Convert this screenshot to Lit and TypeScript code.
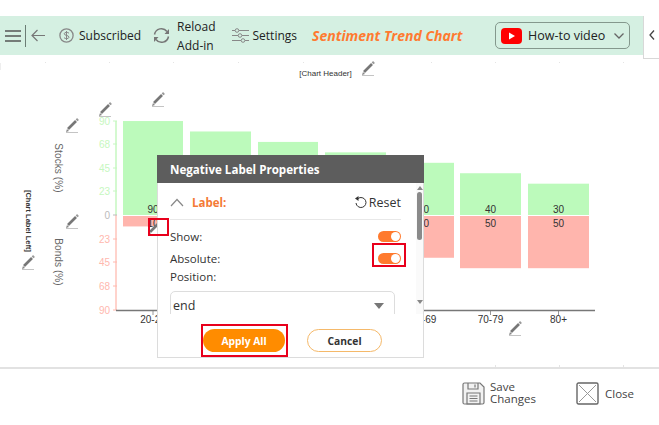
/**
 * Sentiment trend chart add-in with label properties dialog
 */

import { LitElement, css, html, svg } from "lit";
import { customElement } from "lit/decorators.js";

const BARS = [
  { x: 123, w: 60, label: "20-29", pos: 90, neg: 10 },
  { x: 190, w: 61, label: "30-39", pos: 80, neg: 20 },
  { x: 258, w: 60, label: "40-49", pos: 70, neg: 30 },
  { x: 325, w: 61, label: "50-59", pos: 60, neg: 40 },
  { x: 393, w: 61, label: "60-69", pos: 50, neg: 40 },
  { x: 460, w: 61, label: "70-79", pos: 40, neg: 50 },
  { x: 528, w: 61, label: "80+", pos: 30, neg: 50 },
];

const ZERO = 215;
const SCALE = 1.044;
const PENCILS = [
  [99, 103],
  [152, 93],
  [66, 119],
  [66, 215],
  [22, 256],
  [362, 62],
  [509, 322],
  [148, 222],
];
const TICKS = [
  { y: 121, t: "90", c: "#c6f7c0" },
  { y: 144, t: "68", c: "#c6f7c0" },
  { y: 168, t: "45", c: "#c6f7c0" },
  { y: 191, t: "23", c: "#c6f7c0" },
  { y: 215, t: "0", c: "#bbbbbb" },
  { y: 239, t: "23", c: "#ffb8ae" },
  { y: 262, t: "45", c: "#ffb8ae" },
  { y: 286, t: "68", c: "#ffb8ae" },
  { y: 310, t: "90", c: "#ffb8ae" },
];

const pencil = (x: number, y: number) => svg`
  <g transform="translate(${x} ${y})">
    <path d="M2 10 L10 2" stroke="#777" stroke-width="2.6" />
    <path d="M10.6 1.4 L12 0" stroke="#999" stroke-width="2.6" />
    <path d="M0 13 L1 10 L3 12 Z" fill="#888" />
    <path d="M0 13.5 H12" stroke="#c4c4c4" stroke-width="1" />
  </g>
`;

// bars whose labels sit fully behind the dialog don't get any text
const behindDialog = (b: { x: number; w: number }) => b.x > 157 && b.x + b.w < 390;

@customElement("app-root")
export class AppRoot extends LitElement {
  static styles = css`
    :host {
      display: block;
      width: 659px;
      height: 425px;
      background: #fff;
      font-family: "Open Sans", "Noto Sans", sans-serif;
      color: #222;
      overflow: hidden;
    }

    .top {
      display: flex;
      align-items: flex-start;
      padding-top: 16px;
      height: 43px;
    }

    .toolbar {
      width: 643px;
      height: 39px;
      flex: none;
      display: flex;
      align-items: center;
      background: #d5f0e2;
      font-size: 12px;
      box-sizing: border-box;
      padding-left: 5px;
    }

    .toolbar svg {
      display: block;
      flex: none;
    }

    .divider {
      width: 1px;
      height: 22px;
      background: #6b7d74;
      margin: 0 5px 0 4px;
    }

    .item {
      display: flex;
      align-items: center;
    }

    .reload-text {
      line-height: 19px;
      margin-left: 6px;
    }

    .title {
      margin-left: 15px;
      width: 183px;
      flex: none;
      font-size: 14px;
      font-weight: 700;
      font-style: italic;
      color: #ff7a30;
      white-space: nowrap;
    }

    .video {
      width: 135px;
      height: 27px;
      flex: none;
      box-sizing: border-box;
      border: 1px solid #84988d;
      border-radius: 5px;
      display: flex;
      align-items: center;
      padding-left: 5px;
      font-size: 12.5px;
    }

    .video span {
      margin-left: 6px;
      width: 86px;
      white-space: nowrap;
    }

    .side {
      flex: 1;
      height: 43px;
      box-sizing: border-box;
      border-left: 1px solid #d8d8d8;
      border-bottom: 1px solid #d8d8d8;
      display: flex;
      align-items: center;
      justify-content: center;
      padding-bottom: 4px;
    }

    .main {
      position: relative;
      height: 308px;
      border-bottom: 2px solid #e2e2e2;
    }

    .chart {
      display: block;
      font-family: "Liberation Sans", Arial, sans-serif;
    }

    .dialog {
      position: absolute;
      left: 157px;
      top: 96px;
      width: 267px;
      height: 203px;
      box-sizing: border-box;
      border: 1px solid #dcdcdc;
      border-top: none;
      background: #fff;
      display: flex;
      flex-direction: column;
    }

    .dialog-head {
      height: 28px;
      flex: none;
      margin: 0 -1px;
      background: #5d5d5d;
      color: #fff;
      font-size: 11.6px;
      font-weight: 700;
      display: flex;
      align-items: center;
      padding-left: 13px;
      white-space: nowrap;
    }

    .dialog-mid {
      height: 131px;
      flex: none;
      display: flex;
      overflow: hidden;
    }

    .props {
      width: 231px;
      margin-left: 12px;
      flex: none;
      font-size: 11.5px;
      color: #333;
    }

    .label-row {
      height: 37px;
      box-sizing: border-box;
      border-bottom: 1px solid #e8e8e8;
      display: flex;
      align-items: center;
      padding-top: 3px;
    }

    .label-row svg {
      display: block;
    }

    .label-name {
      margin-left: 6px;
      color: #f47a36;
      font-weight: 700;
      font-size: 11.5px;
      flex: 1;
    }

    .reset {
      display: flex;
      align-items: center;
      gap: 2px;
      font-size: 12.5px;
    }

    .row {
      height: 22px;
      display: flex;
      align-items: center;
      justify-content: space-between;
    }

    .row.first {
      margin-top: 5px;
    }

    .pos-label {
      height: 18px;
      margin-top: -2px;
      display: flex;
      align-items: center;
    }

    .toggle {
      width: 23px;
      height: 11px;
      border-radius: 6px;
      background: #ff7a2e;
      position: relative;
    }

    .toggle::after {
      content: "";
      position: absolute;
      right: 1px;
      top: 1px;
      width: 9px;
      height: 9px;
      border-radius: 50%;
      background: #fff;
    }

    .select {
      width: 225px;
      height: 40px;
      margin-top: 6px;
      box-sizing: border-box;
      border: 1px solid #dddddd;
      border-radius: 5px;
      padding: 5px 10px 0 2px;
      display: flex;
      justify-content: space-between;
      font-size: 12.5px;
    }

    .caret {
      width: 0;
      height: 0;
      margin-top: 6px;
      border-left: 5px solid transparent;
      border-right: 5px solid transparent;
      border-top: 6px solid #777;
    }

    .scroll {
      margin-left: 15px;
      width: 7px;
      flex: none;
      display: flex;
      flex-direction: column;
      align-items: center;
      background: #fafafa;
      position: relative;
    }

    .scroll .up {
      margin-top: 3px;
      border-left: 3px solid transparent;
      border-right: 3px solid transparent;
      border-bottom: 4px solid #888;
    }

    .scroll .thumb {
      width: 5px;
      height: 48px;
      margin-top: 2px;
      background: #8a8a8a;
      border-radius: 3px;
    }

    .scroll .down {
      margin-top: 60px;
      border-left: 3px solid transparent;
      border-right: 3px solid transparent;
      border-top: 4px solid #888;
    }

    .dialog-foot {
      flex: 1;
      display: flex;
      padding: 15px 0 0 45px;
      gap: 22px;
      font-size: 10.3px;
      font-weight: 700;
    }

    .btn {
      height: 23px;
      border-radius: 12px;
      box-sizing: border-box;
      display: flex;
      align-items: center;
      justify-content: center;
    }

    .apply {
      width: 82px;
      background: #ff8c00;
      color: #fff;
    }

    .cancel {
      width: 75px;
      border: 1px solid #f5b96a;
      color: #333;
    }

    .mark {
      position: absolute;
      border: 2px solid #e8001c;
      box-sizing: border-box;
    }

    .mark.bar {
      left: 148px;
      top: 159px;
      width: 21px;
      height: 18px;
    }

    .mark.toggle-mark {
      left: 372px;
      top: 184px;
      width: 34px;
      height: 24px;
    }

    .mark.apply-mark {
      left: 201px;
      top: 265px;
      width: 87px;
      height: 33px;
    }

    .footer {
      display: flex;
      justify-content: flex-end;
      padding: 12px 25px 0 0;
      font-size: 11.5px;
      color: #444;
    }

    .action {
      display: flex;
      align-items: center;
    }

    .action svg {
      display: block;
    }

    .save {
      gap: 5px;
      line-height: 12px;
      margin-right: 40px;
    }

    .close {
      gap: 6px;
    }
  `;

  private _toolbar() {
    return html`
      <div class="toolbar">
        <svg width="16" height="12" viewBox="0 0 16 12" stroke="#555" stroke-width="1.5">
          <path d="M0 1H16M0 6H16M0 11H16" />
        </svg>
        <div class="divider"></div>
        <svg width="14" height="13" viewBox="0 0 14 13" fill="none" stroke="#777" stroke-width="1.2">
          <path d="M14 6.5H1M6.500 1L1 6.500L6.500 12" />
        </svg>
        <div class="item" style="margin-left:14px">
          <svg width="15" height="15" viewBox="0 0 15 15" fill="none" stroke="#888" stroke-width="1.3">
            <circle cx="7.500" cy="7.500" r="6.600" />
            <path d="M10 5.200C9 4 5.200 4 5.200 5.800C5.200 7.800 10 7 10 9.200C10 11 6 11 5 9.700M7.500 3V12" stroke-width="1" />
          </svg>
          <span style="margin-left:5px">Subscribed</span>
        </div>
        <div class="item" style="margin-left:11px">
          <svg width="19" height="17" viewBox="0 0 19 17" fill="none" stroke="#777" stroke-width="1.5">
            <path d="M2.500 7.500A7 7 0 0 1 15 4.500M16.500 9.500A7 7 0 0 1 4 12.500" />
            <path d="M17 2V7H12.500Z M2 15V10H6.500Z" fill="#777" stroke="none" />
          </svg>
          <div class="reload-text">Reload<br />Add-in</div>
        </div>
        <div class="item" style="margin-left:16px">
          <svg width="17" height="15" viewBox="0 0 17 15" fill="none" stroke="#888" stroke-width="1">
            <path d="M0 2.500H3M7 2.500H17M0 7.500H6M10 7.500H17M0 12.500H9M13 12.500H17" />
            <circle cx="5" cy="2.500" r="1.800" />
            <circle cx="8" cy="7.500" r="1.800" />
            <circle cx="11" cy="12.500" r="1.800" />
          </svg>
          <span style="margin-left:4px">Settings</span>
        </div>
        <div class="title">Sentiment Trend Chart</div>
        <div class="video">
          <svg width="21" height="16" viewBox="0 0 21 16">
            <rect width="21" height="16" rx="4" fill="#f00" />
            <path d="M8 4.500L14 8L8 11.500Z" fill="#fff" />
          </svg>
          <span>How-to video</span>
          <svg width="10" height="6" viewBox="0 0 10 6" fill="none" stroke="#666" stroke-width="1.300">
            <path d="M.5 .5L5 5L9.500 .5" />
          </svg>
        </div>
      </div>
    `;
  }

  private _chart() {
    return html`
      <svg class="chart" width="659" height="308" viewBox="0 59 659 308">
        ${[45, 109, 173, 238, 303, 431, 495, 559, 623].map(
          (x) => svg`<rect x=${x} y="62" width="1" height="1" fill="#e4e4e4" />`
        )}
        ${[495, 559, 623].map(
          (x) => svg`<rect x=${x} y="365" width="1" height="2" fill="#e4e4e4" />`
        )}
        <rect x="0" y="63" width="1" height="7" fill="#eeeeee" />
        <text x="325.500" y="76" font-size="8" text-anchor="middle" fill="#333">[Chart Header]</text>
        <path d="M116 121V215" stroke="#c6f7c0" stroke-width="1.500" />
        <path d="M116 215V310" stroke="#ffc4bb" stroke-width="1.500" />
        ${TICKS.map(
          (t) => svg`
            <path d="M113 ${t.y}H117" stroke=${t.c} />
            <text x="110" y=${t.y + 3.5} font-size="10" text-anchor="end" fill=${t.c}>${t.t}</text>
          `
        )}
        ${BARS.map((b) => {
          const ph = b.pos * SCALE;
          const nh = b.neg * SCALE;
          const cx = b.x + b.w / 2;
          return svg`
            <rect x=${b.x} y=${ZERO - ph} width=${b.w} height=${ph} fill="#bcfabb" />
            <rect x=${b.x} y=${ZERO + 1} width=${b.w} height=${nh} fill="#ffb5ad" />
            ${behindDialog(b)
              ? null
              : svg`
                <text x=${cx} y="213" font-size="10" text-anchor="middle" fill="#333">${b.pos}</text>
                <text x=${cx} y="227" font-size="10" text-anchor="middle" fill="#333">${b.neg}</text>
                <path d="M${cx} 310V315" stroke="#999" />
                <text x=${cx} y="323" font-size="10" text-anchor="middle" fill="#333">${b.label}</text>
              `}
          `;
        })}
        <path d="M116 310.500H595" stroke="#777" stroke-width="1.500" />
        <text transform="translate(55 168) rotate(90)" font-size="10" text-anchor="middle" fill="#666" letter-spacing=".1">Stocks (%)</text>
        <text transform="translate(55 262) rotate(90)" font-size="10" text-anchor="middle" fill="#666" letter-spacing=".1">Bonds (%)</text>
        <text transform="translate(26 221) rotate(90)" font-size="7.500" font-weight="700" text-anchor="middle" fill="#333">[Chart Label Left]</text>
        ${PENCILS.map(([x, y]) => pencil(x, y))}
      </svg>
    `;
  }

  private _dialog() {
    return html`
      <div class="dialog">
        <div class="dialog-head">Negative Label Properties</div>
        <div class="dialog-mid">
          <div class="props">
            <div class="label-row">
              <svg width="16" height="9" viewBox="0 0 16 9" fill="none" stroke="#888" stroke-width="1.200">
                <path d="M1 8L7 1.500L13 8" />
              </svg>
              <span class="label-name">Label:</span>
              <span class="reset">
                <svg width="13" height="13" viewBox="0 0 13 13" fill="none" stroke="#333" stroke-width="1">
                  <path d="M4 2.500A5 5 0 1 1 2 7" />
                  <path d="M4.500 0V5L1 2.500Z" fill="#333" stroke="none" />
                </svg>
                Reset
              </span>
            </div>
            <div class="row first">Show:<div class="toggle"></div></div>
            <div class="row">Absolute:<div class="toggle"></div></div>
            <div class="pos-label">Position:</div>
            <div class="select">end<div class="caret"></div></div>
          </div>
          <div class="scroll">
            <div class="up"></div>
            <div class="thumb"></div>
            <div class="down"></div>
          </div>
        </div>
        <div class="dialog-foot">
          <div class="btn apply">Apply All</div>
          <div class="btn cancel">Cancel</div>
        </div>
      </div>
      <div class="mark bar"></div>
      <div class="mark toggle-mark"></div>
      <div class="mark apply-mark"></div>
    `;
  }

  render() {
    return html`
      <div class="top">
        ${this._toolbar()}
        <div class="side">
          <svg width="6" height="10" viewBox="0 0 6 10" fill="none" stroke="#444" stroke-width="1.300">
            <path d="M5 .5L1 5L5 9.500" />
          </svg>
        </div>
      </div>
      <div class="main">${this._chart()}${this._dialog()}</div>
      <div class="footer">
        <div class="action save">
          <svg width="23" height="23" viewBox="0 0 23 23" fill="none" stroke="#777" stroke-width="1.200">
            <path d="M1 2.500Q1 1 2.500 1H18L22 5V20.500Q22 22 20.500 22H2.500Q1 22 1 20.500Z" fill="#f2f2f2" />
            <path d="M6 1V7H16V1M13 2.500V5.500" />
            <path d="M5 11H18V22H5ZM7.500 14H15.500M7.500 16.500H15.500M7.500 19H15.500" />
          </svg>
          <div>Save<br />Changes</div>
        </div>
        <div class="action close">
          <svg width="23" height="23" viewBox="0 0 23 23" fill="none">
            <rect x="1" y="1" width="21" height="21" rx="1.500" stroke="#666" stroke-width="1.400" />
            <path d="M3 3L20 20M20 3L3 20" stroke="#999" stroke-width="1" />
          </svg>
          <span>Close</span>
        </div>
      </div>
    `;
  }
}

declare global {
  interface HTMLElementTagNameMap {
    "app-root": AppRoot;
  }
}
